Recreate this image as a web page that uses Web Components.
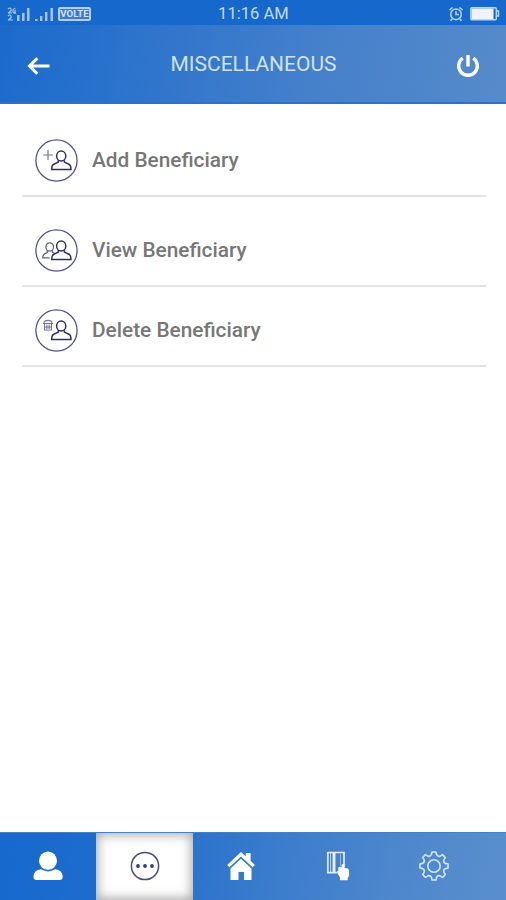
<!DOCTYPE html>
<html lang="en"><head><meta charset="utf-8"><title>Miscellaneous</title>
<style>html,body{margin:0;height:100%;background:#fff;font-family:Roboto,"Liberation Sans",sans-serif}</style></head>
<body><misc-screen></misc-screen>
<script>
// Builds the closed outline of an eight-toothed cog centred on the origin.
function gearPath(){
  const at=(deg,r)=>{const t=deg*Math.PI/180;return (r*Math.cos(t)).toFixed(2)+' '+(r*Math.sin(t)).toFixed(2)};
  let d='M'+at(-103,11.6);
  for(let i=0;i<8;i++){
    const a=i*45-90;
    d+=`L${at(a-8,14.2)}L${at(a+8,14.2)}L${at(a+13,11.6)}A3 3 0 0 0 ${at(a+32,11.6)}`;
  }
  return d+'Z';
}
const person='<g fill="none" stroke="#2c2c78" stroke-width="1.5"><ellipse cx="26.2" cy="17" rx="4.6" ry="5.1"/><path d="M23.3 21.2v1.9l-4.5 2.1q-2.1 1-2.1 5.2h19.3q0-4.2-2.1-5.2l-4.5-2.1v-1.9"/></g>';
const ring='<circle cx="21.5" cy="21.5" r="20.6" fill="none" stroke="#54548a" stroke-width="1.3"/>';
const icons={
 back:['0 0 24 20',24,20,'<path d="M22.5 10H3M10.3 2.2L2.5 10l7.8 7.8" fill="none" stroke="#fff" stroke-width="3"/>'],
 power:['0 0 24 24',24,24,'<path d="M6.8 4.2A9.3 9.3 0 1 0 17.2 4.2M12 1v11.5" fill="none" stroke="#fff" stroke-width="3.4"/>'],
 add:['0 0 43 43',43,43,ring+'<path d="M8 16h10M13 11v10" stroke="#77779d" stroke-width="1.2"/>'+person],
 view:['0 0 43 43',43,43,ring+'<g fill="none" stroke="#62628f" stroke-width="1.3"><ellipse cx="14.7" cy="18" rx="3.8" ry="4.2"/><path d="M12.3 21.5v1.8l-3 1.8q-1.7 1.2-1.7 3.8h7M17.5 21.5v1.8l1.8 1"/></g>'+person],
 del:['0 0 43 43',43,43,ring+'<g fill="none" stroke="#77779d" stroke-width="1.1"><path d="M9 14q0-2.6 4-2.6t4 2.6M8 14.5h10M9.5 14.5v6.5h7v-6.5M9.5 18h7M11.8 15.5v4.5M14.2 15.5v4.5"/></g>'+person],
 user:['0 0 30 30',30,30,'<g fill="#fff"><ellipse cx="15" cy="9.7" rx="9" ry="9.2"/><path d="M.5 26Q.5 19 8 18.3 15 22.6 22 18.3 29.7 19 29.7 26 29.7 29 26.5 29H3.5Q.5 29 .5 26Z"/></g>'],
 more:['0 0 30 30',30,30,'<circle cx="15" cy="15" r="13.6" fill="none" stroke="#4c4c84" stroke-width="1.5"/><g fill="#2f3e7d"><circle cx="8" cy="15" r="1.9"/><circle cx="15" cy="15" r="1.9"/><circle cx="22" cy="15" r="1.9"/></g>'],
 home:['0 0 30 30',30,30,'<path d="M15 1l4.8 4.4V2h4.8v7.8l4.3 4.2-2.2 2.3L15 5.5 3.4 16.3 1.2 14Z" fill="#fff"/><path d="M15 7.8L25.5 17.5V29H18v-8h-5.5v8H4.5V17.5Z" fill="#fff"/>'],
 card:['0 0 26 30',26,30,'<g stroke="#e3edfb" fill="none"><path d="M2.5 1.5h16.5v14M2.8 1v20.7h9" stroke-width="1.7"/><path d="M5.5 2v19" stroke-width="1" opacity=".7"/><path d="M9 2v19.5" stroke-width="3"/><path d="M15.5 3v12" stroke-width="1" opacity=".5"/></g><path d="M13.3 16.5q1.5-1.5 3.3.3v-3q1.7-1.5 3 0V17q4 .2 4.4 2v5q0 2-1.3 3V29.3h-7.7v-2.8L12.3 22q-.8-2.3 1-2Z" fill="#fff"/>'],
 gear:['-15 -15 30 30',30,30,`<g fill="none" stroke="#d2e5fb" stroke-width="1.6" stroke-linejoin="round"><path d="${gearPath()}"/><circle r="6.2"/></g>`],
 signal:['0 0 48 18',48,18,'<g fill="#a4c5f3"><path d="M10 10h2.5v6H10zM15 8h2.5v8H15zM20 3h2.5v13h-2.5zM28 14h2.5v2H28zM33 11h2.4v5H33zM38 7h2.4v9H38zM43.5 3H46v13h-2.5z"/></g><path d="M1 4q2-2 3 0t-3 4h4M8.5 4Q6 3 6 6t3 1.5M1 11q2-2 3 0t-3 4h5M8 5v4" fill="none" stroke="#a4c6f4" stroke-width="1.2"/>'],
 alarm:['0 0 16 16',16,16,'<g fill="none" stroke="#b5d2f9" stroke-width="1.6"><circle cx="8" cy="8.3" r="5.3"/><path d="M1.5 4l3-2.5M14.5 4l-3-2.5M8 5.3v3.2h3M4 13l-1.5 1.7M12 13l1.5 1.7"/></g>'],
 battery:['0 0 30 14',30,14,'<rect x=".8" y=".8" width="25.5" height="12" rx="1" fill="none" stroke="#b9d4f8" stroke-width="1.4"/><path d="M1.5 1.5h22v10.5h-22z" fill="#f0f3ff"/><path d="M27 4h1.5v5H27" fill="none" stroke="#b9d4f8" stroke-width="1.4"/>']
};
function define(name,html,setup){
  customElements.define(name,class extends HTMLElement{
    constructor(){super();this.attachShadow({mode:'open'})}
    connectedCallback(){this.shadowRoot.innerHTML=html;if(setup)setup(this)}
  });
}
define('ui-icon','<style>:host,svg{display:block;flex:none}</style><div></div>',el=>{
  const [box,w,h,body]=icons[el.getAttribute('name')];
  el.shadowRoot.querySelector('div').innerHTML=`<svg viewBox="${box}" width="${w}" height="${h}">${body}</svg>`;
});
define('status-bar',`<style>
:host{height:25px;background:#1668cd;color:#c1daf9;display:grid;grid-template-columns:1fr auto 1fr;align-items:center;box-sizing:border-box;padding:2px 6px 0 7px}
.l,.r{display:flex;align-items:center}.r{justify-content:flex-end;gap:6px}
.v{margin-left:3px;width:33px;height:14px;box-sizing:border-box;border-radius:2px;background:#3b7bd1;border:2px solid #b5cdf1;color:#d4e3fa;font:700 9.6px/10px Roboto,sans-serif;text-align:center;display:flex;justify-content:center}
.t{font-size:16.6px;line-height:22px;padding-top:1px}
</style><div class="l"><ui-icon name="signal"></ui-icon><span class="v">VOLTE</span></div><span class="t">11:16 AM</span><div class="r"><ui-icon name="alarm"></ui-icon><ui-icon name="battery"></ui-icon></div>`);
define('app-header',`<style>
:host{height:79px;background:linear-gradient(100deg,#1b6acc 0%,#2b73cc 25%,#4580cb 62%,#558bca 100%);border-bottom:2px solid #2b72c8;box-sizing:border-box;display:grid;grid-template-columns:1fr auto 1fr;align-items:center;padding:0 26px 0 27px}
span{font-size:21px;line-height:24px;color:#d0e3fb}.p{justify-self:end;margin-top:4px}.b{margin-top:5px}
</style><ui-icon class="b" name="back"></ui-icon><span><slot></slot></span><ui-icon class="p" name="power"></ui-icon>`);
define('menu-row',`<style>
:host{display:flex;align-items:flex-end;box-sizing:border-box;border-bottom:2px solid #e3e3e3;margin:0 20px 0 22px;padding:0 0 13px 13px;gap:14px;height:80px}
span{font-size:20.8px;line-height:43px;font-weight:500;color:#777}
</style><div></div><span><slot></slot></span>`,el=>{
  const icon=document.createElement('ui-icon');icon.setAttribute('name',el.getAttribute('icon'));el.shadowRoot.querySelector('div').append(icon);
});
define('tab-bar',`<style>
:host{height:68px;display:grid;grid-template-columns:96px 97px 96px 97px 1fr;background:linear-gradient(100deg,#1769ce 0%,#1f6ccd 25%,#397bcc 52%,#4c86cc 76%,#598fcd 100%);box-shadow:inset 0 1px #4381c5}
div{display:flex;justify-content:center;align-items:center;padding-bottom:1px}.on{background:#fff;box-shadow:inset 0 0 11px 2px #aaa;margin-top:1px;padding-bottom:2px}.g{padding-right:25px}
</style><div><ui-icon name="user"></ui-icon></div><div class="on"><ui-icon name="more"></ui-icon></div><div><ui-icon name="home"></ui-icon></div><div><ui-icon name="card"></ui-icon></div><div class="g"><ui-icon name="gear"></ui-icon></div>`);
define('misc-screen',`<style>
:host{display:flex;flex-direction:column;width:506px;height:900px;background:#fff;overflow:hidden}
main{flex:1;padding-top:13px;display:flex;flex-direction:column}.view{margin-top:10px}
</style><status-bar></status-bar><app-header>MISCELLANEOUS</app-header><main><menu-row icon="add">Add Beneficiary</menu-row><menu-row class="view" icon="view">View Beneficiary</menu-row><menu-row icon="del">Delete Beneficiary</menu-row></main><tab-bar></tab-bar>`);
</script></body></html>
